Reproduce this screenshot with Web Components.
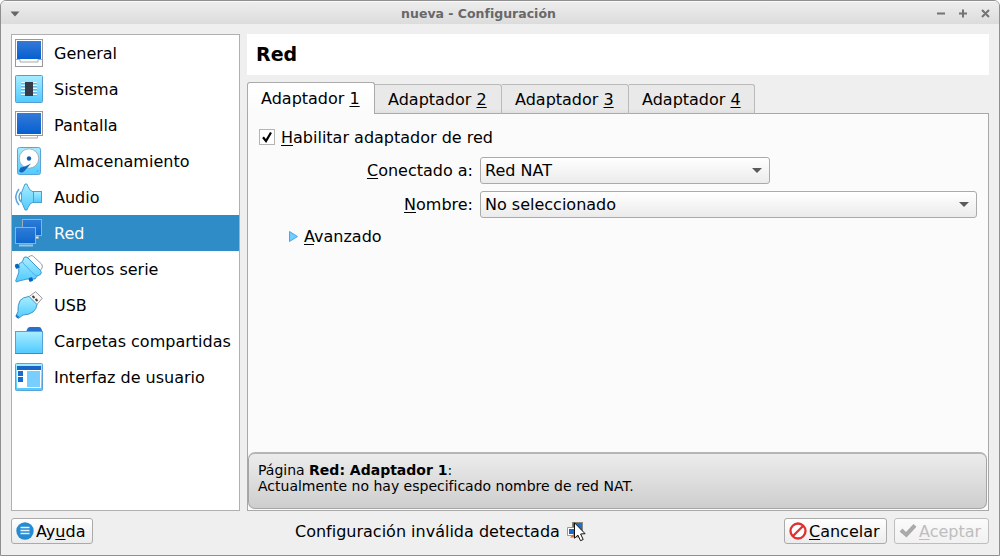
<!DOCTYPE html>
<html lang="es">
<head>
<meta charset="utf-8">
<title>nueva - Configuración</title>
<style>
html,body{margin:0;height:100%;overflow:hidden;background:#fff}
body{font:16px/20px "DejaVu Sans",sans-serif;color:#000}
u{text-decoration-thickness:1px;text-underline-offset:2px;text-decoration-skip-ink:none}
</style>
</head>
<body>
<config-window>
  <title-bar slot="title">nueva - Configuración</title-bar>
  <nav-item slot="nav" icon="general">General</nav-item>
  <nav-item slot="nav" icon="system">Sistema</nav-item>
  <nav-item slot="nav" icon="display">Pantalla</nav-item>
  <nav-item slot="nav" icon="disk">Almacenamiento</nav-item>
  <nav-item slot="nav" icon="audio">Audio</nav-item>
  <nav-item slot="nav" icon="network" selected>Red</nav-item>
  <nav-item slot="nav" icon="serial">Puertos serie</nav-item>
  <nav-item slot="nav" icon="usb">USB</nav-item>
  <nav-item slot="nav" icon="folder">Carpetas compartidas</nav-item>
  <nav-item slot="nav" icon="ui">Interfaz de usuario</nav-item>
  <span slot="heading">Red</span>
  <tab-item slot="tabs" selected>Adaptador <u>1</u></tab-item>
  <tab-item slot="tabs">Adaptador <u>2</u></tab-item>
  <tab-item slot="tabs">Adaptador <u>3</u></tab-item>
  <tab-item slot="tabs" style="width:126px">Adaptador <u>4</u></tab-item>
  <adapter-form slot="page"></adapter-form>
  <message-pane slot="message">Página <b>Red: Adaptador 1</b>:<br>Actualmente no hay especificado nombre de red NAT.</message-pane>
  <push-button slot="left" icon="help" style="width:82px">Ay<u>u</u>da</push-button>
  <span slot="status">Configuración inválida detectada</span>
  <ui-icon slot="warning" name="warning"></ui-icon>
  <push-button slot="right" icon="cancel" style="width:103px"><u>C</u>ancelar</push-button>
  <push-button slot="right" icon="accept" disabled style="width:95px"><u>A</u>ceptar</push-button>
</config-window>

<script>
const grads = `<defs>
<linearGradient id="b" x1="0" y1="0" x2="0" y2="1"><stop offset="0" stop-color="#3579d8"/><stop offset="1" stop-color="#0560d0"/></linearGradient>
<linearGradient id="c" x1="0" y1="0" x2="0" y2="1"><stop offset="0" stop-color="#a9edff"/><stop offset="1" stop-color="#4fcaff"/></linearGradient>
<linearGradient id="n" x1="0" y1="0" x2="0" y2="1"><stop offset="0" stop-color="#2f7cd7"/><stop offset="1" stop-color="#0d68cc"/></linearGradient>
</defs>`;
const icons = {
general:[28,28,`<rect x=".5" y=".5" width="27" height="27" fill="#fff" stroke="#989898"/><rect x="2" y="2" width="24" height="18" fill="url(#b)"/><path d="M1 20.5h4v2.500h18v-2.500h4" fill="none" stroke="#aaa"/>`],
system:[28,28,`<rect x=".5" y=".5" width="27" height="27" rx="1" fill="url(#c)" stroke="#579cd3"/><path d="M6 8.500h16M6 11.500h16M6 14.500h16M6 17.500h16M6 20.500h16" stroke="#6fb4dc"/><path d="M6 7.500h16M6 10.500h16M6 13.500h16M6 16.500h16M6 19.500h16" stroke="#e6faff"/><rect x="10" y="7" width="8" height="14" fill="#353c48"/>`],
display:[28,28,`<path d="M5.500 24.500h17v2.500h-17z" fill="#fff" stroke="#aaa"/><rect x=".5" y=".5" width="27" height="24" fill="#fff" stroke="#999"/><rect x="2" y="2" width="24" height="21" fill="url(#b)"/>`],
disk:[28,28,`<rect x="2.500" y=".5" width="23" height="27" rx="2" fill="url(#c)" stroke="#59a4da"/><circle cx="14" cy="11.500" r="9.700" fill="#fff" stroke="#999" stroke-width=".7"/><circle cx="14" cy="11.500" r="2.200" fill="#145fae"/><path d="M16 16.500L9.500 24Q6 27 4 24L5.500 20.500Q10 20 16 16.500Z" fill="#1765b9"/><circle cx="22.500" cy="24" r=".8" fill="#449ed6"/>`],
audio:[28,28,`<path d="M4 6Q-2.500 14 4 22M6 9Q2 14 6 19" fill="none" stroke="#5aa7dc" stroke-width="1.500"/><path d="M6.500 9.500L10 1Q12.500 0 13 3.500Q14.500 8 18.500 9V19Q14.500 20 13 24.500Q12.500 28 10 27L6.500 18.500Z" fill="url(#c)" stroke="#4d9fce"/><rect x="18.500" y="8.500" width="8" height="11" fill="url(#c)" stroke="#4aa0d1"/>`],
network:[28,28,`<g stroke="#9bb0bf"><path d="M11.500 17.500h12v2h-12z" fill="#e6edf3"/><rect x="7.500" y=".5" width="19" height="16" fill="url(#n)"/><rect x=".5" y="8.500" width="20" height="16" fill="url(#n)"/><path d="M4 26.500h14" stroke="#9dc1df" stroke-width="2"/></g>`],
serial:[28,28,`<path d="M12 3L15.500.8Q17 0 18.500 1.500L26.500 9Q28 11 27 13L25 16Z" fill="#fff" stroke="#999"/><path d="M7.500 6.500L9 2.500Q11 1 13 3L25.500 15.500Q27 17.500 25.500 19.500L22 21 20 24Q12 23 4 26L1.500 27 .7 26Q5 18 4 9Z" fill="url(#c)" stroke="#3d98ce"/><path d="M7.500 6.500Q8 9 11 11L17 17.500Q20 20.500 22 21" fill="none" stroke="#55aee4"/><rect x="0" y="9" width="4" height="4.500" rx="1" fill="#0868bf" transform="rotate(-25 2 11)"/><rect x="14" y="22.500" width="4" height="4" rx="1" fill="#0868bf" transform="rotate(-20 16 25)"/>`],
usb:[28,28,`<path d="M13.500 6L20.500.7 27.300 7.200 21.500 14z" fill="#f8f8f8" stroke="#999"/><path d="M17.500 5l2 2M20.500 8l2 2" stroke="#444" stroke-width="2"/><path d="M5 9.500Q8 6 14 5.500L22 13.500Q21.500 18 18 21Q14 24 8 24L3.500 27.300 1 25 3 20.500Q2.500 14 5 9.500Z" fill="url(#c)" stroke="#4098c8"/><path d="M1.500 23.500l3 2.500-2 1.500-2-2z" fill="#2878c8"/>`],
folder:[28,28,`<path d="M11 5L12.500 1.500Q13 0 15 0h9q2 0 2.500 2l1 3z" fill="#2570cc"/><rect x=".5" y="4.500" width="27" height="22" fill="url(#c)" stroke="#55a2db"/><path d="M0 26.500h28" stroke="#348ecf"/>`],
ui:[28,28,`<rect x=".5" y=".5" width="27" height="27" rx="1" fill="url(#c)" stroke="#5ba2dc"/><rect x="2" y="3" width="24" height="22" fill="#fff"/><rect x="2" y="3" width="24" height="4" fill="#1766c8"/><path d="M3 8h5v5H3zM3 14h5v5H3z" fill="#1a6bd0"/><rect x="12" y="8" width="13" height="16" fill="#78cfff"/>`],
help:[18,18,`<circle cx="9" cy="9" r="8.700" fill="#258bd2"/><path d="M4.500 5.500h9M4.500 8.500h9M4.500 11.500h9" stroke="#e3f3ff" stroke-width="1.400"/>`],
cancel:[18,18,`<circle cx="9" cy="9" r="7.500" fill="#fff" stroke="#df3032" stroke-width="2.300"/><path d="M4 14L14 4" stroke="#df3032" stroke-width="2.300"/>`],
accept:[18,18,`<path d="M.5 9.500l3-3L7 10l7.500-8 3 2.800L7.500 15.500z" fill="#aaa"/>`],
expand:[11,13,`<path d="M1.500 1.500v10l8-5z" fill="#72cdff" stroke="#48a7ea"/>`],
warning:[24,24,`<rect x="5.500" y=".5" width="10" height="9" fill="#1970cb" stroke="#8d8780"/><path d="M.5 5.500h9v8h-9z" fill="#fff" stroke="#999"/><rect x="2" y="7" width="6" height="5" fill="#176acb"/><path d="M3 15.500l4-4 9 4z" fill="#e7662c"/><path d="M7.500.8v15.400l3.400-3.100 2.600 5.600 2.700-1.200-2.600-5.500 4.500-.3z" fill="#fff" stroke="#111"/>`]
};

class BaseElement extends HTMLElement {
  paint(css, html) {
    if (!this.shadowRoot) this.attachShadow({mode:'open'});
    this.shadowRoot.innerHTML = `<style>*{box-sizing:border-box}u{text-decoration-thickness:1px;text-underline-offset:2px;text-decoration-skip-ink:none}${css}</style>${html}`;
  }
}
customElements.define('ui-icon', class extends BaseElement {
  connectedCallback() {
    const [w,h,art] = icons[this.getAttribute('name')];
    this.paint(`:host{display:block;flex:none;width:${w}px;height:${h}px}svg{display:block}`,
      `<svg width="${w}" height="${h}" viewBox="0 0 ${w} ${h}">${grads}${art}</svg>`);
  }
});
customElements.define('title-bar', class extends BaseElement {
  connectedCallback() {
    this.paint(`:host{display:flex;align-items:center;height:23px;background:linear-gradient(#ededed,#dcdcdc);border-top:1px solid #fafafa;box-sizing:border-box;padding:2px 8px 0 9px;font:bold 12.5px/18px "DejaVu Sans",sans-serif;color:#686868}
      .t{flex:1;text-align:center;padding-bottom:1px}svg{display:block;flex:none}`,
      `<svg width="10" height="10"><path d="M.5 2.500h9L5 7.500z" fill="#666"/></svg><span class="t"><slot></slot></span>
       <svg width="54" height="10" fill="none" stroke="#737373" stroke-width="2"><path d="M0 4.500h8M22 4.500h8M26 .5v8M45 1l7 7M52 1l-7 7"/></svg>`);
  }
});
customElements.define('nav-item', class extends BaseElement {
  connectedCallback() {
    this.paint(`:host{display:flex;align-items:center;gap:11px;height:36px;padding:0 3px;box-sizing:border-box;white-space:nowrap}
      :host([selected]){background:#308cc6;color:#fff}span{padding-top:2px}`,
      `<ui-icon name="${this.getAttribute('icon')}"></ui-icon><span><slot></slot></span>`);
  }
});
customElements.define('tab-item', class extends BaseElement {
  connectedCallback() {
    this.paint(`:host{display:block;box-sizing:border-box;width:127px;height:30px;margin-top:2px;padding:5px 0 0 13px;border:1px solid #bababa;border-left:0;border-bottom-color:#aaa;border-top-right-radius:3px;background:linear-gradient(#e9e9e9 85%,#e0e0e0);white-space:nowrap}
      :host([selected]){width:128px;height:32px;margin-top:0;border:1px solid #aaa;border-bottom:0;border-radius:3px 3px 0 0;background:linear-gradient(#fff,#fbfbfb);padding-top:6px}`, `<slot></slot>`);
  }
});
customElements.define('combo-box', class extends BaseElement {
  connectedCallback() {
    this.paint(`:host{display:flex;align-items:center;justify-content:space-between;box-sizing:border-box;height:27px;padding:0 7px 0 4px;border:1px solid #aaa;border-radius:3px;background:linear-gradient(#fff,#ebebeb);white-space:nowrap}`,
      `<slot></slot><svg width="10" height="5"><path d="M0 0h10L5 5z" fill="#5a5a5a"/></svg>`);
  }
});
customElements.define('adapter-form', class extends BaseElement {
  connectedCallback() {
    this.paint(`:host{display:block;padding:14px 11px 0 11px}
      .check{display:flex;align-items:center;gap:6px;height:20px}.box{width:16px;height:16px;border:1px solid #b4b4b4;background:#fff;margin-top:-2px}
      svg{display:block}
      .grid{display:grid;grid-template-columns:214px 1fr;column-gap:7px;row-gap:7px;align-items:center;margin-top:9px}
      .l{text-align:right}.narrow{width:290px}
      .more{display:flex;align-items:center;gap:5px;height:20px;margin:9px 0 0 29px}.more ui-icon{margin-top:-2px}`,
      `<div class="check"><span class="box"><svg width="14" height="14"><path d="M3 7.300L6 11 11 2.500" fill="none" stroke="#000" stroke-width="2.200"/></svg></span><span><u>H</u>abilitar adaptador de red</span></div>
       <div class="grid"><span class="l"><u>C</u>onectado a:</span><combo-box class="narrow">Red NAT</combo-box>
       <span class="l"><u>N</u>ombre:</span><combo-box>No seleccionado</combo-box></div>
       <div class="more"><ui-icon name="expand"></ui-icon><span><u>A</u>vanzado</span></div>`);
  }
});
customElements.define('message-pane', class extends BaseElement {
  connectedCallback() {
    this.paint(`:host{display:block;box-sizing:border-box;height:57px;padding:8px 9px;border:1px solid #a5a5a5;border-top:2px solid #b5b5b5;border-radius:7px;background:linear-gradient(#ececec,#cecece);font-size:14px;line-height:16px}`, `<slot></slot>`);
  }
});
customElements.define('push-button', class extends BaseElement {
  connectedCallback() {
    this.paint(`:host{display:flex;align-items:center;gap:2px;box-sizing:border-box;height:26px;padding:0 4px;border:1px solid #aaa;border-radius:3px;background:linear-gradient(#fff,#ececec);white-space:nowrap}
      :host([disabled]){border-color:#bebebe;color:#bebebe;background:linear-gradient(#fbfbfb,#f1f1f1)}span{padding-top:2px}`,
      `<ui-icon name="${this.getAttribute('icon')}"></ui-icon><span><slot></slot></span>`);
  }
});
customElements.define('config-window', class extends BaseElement {
  connectedCallback() {
    this.paint(`:host{display:flex;flex-direction:column;box-sizing:border-box;width:1000px;height:556px;border:1px solid #8f8f8f;border-radius:6px 6px 0 0;background:#efefef;overflow:hidden}
      .body{display:grid;grid-template-columns:229px 742px;column-gap:7px;padding:10px 0 0 10px;height:487px}
      .nav{border:1px solid #b0b0b0;background:#fff;height:477px}
      .main{display:flex;flex-direction:column;height:477px}
      .head{height:41px;background:#fff;padding:9px 9px 0;font:bold 19px/23px "DejaVu Sans",sans-serif}
      .tabs{display:flex;margin-top:7px;height:32px;position:relative;z-index:1}
      .page{flex:1;margin-top:-1px;border:1px solid #a8a8a8;background:#fbfbfb;display:flex;flex-direction:column}
      .page slot[name=page]{display:block;flex:1}.msg{padding:0 1px 1px 0}
      .foot{display:flex;align-items:center;height:26px;margin:7px 10px 0}
      .status{flex:1;display:flex;gap:7px;padding:2px 0 0 202px}.right{display:flex;gap:7px}
      .warn{height:20px}`,
      `<slot name="title"></slot><div class="body"><div class="nav"><slot name="nav"></slot></div>
       <div class="main"><div class="head"><slot name="heading"></slot></div><div class="tabs"><slot name="tabs"></slot></div>
       <div class="page"><slot name="page"></slot><div class="msg"><slot name="message"></slot></div></div></div></div>
       <div class="foot"><slot name="left"></slot><div class="status"><slot name="status"></slot><span class="warn"><slot name="warning"></slot></span></div><div class="right"><slot name="right"></slot></div></div>`);
  }
});
</script>
</body>
</html>
